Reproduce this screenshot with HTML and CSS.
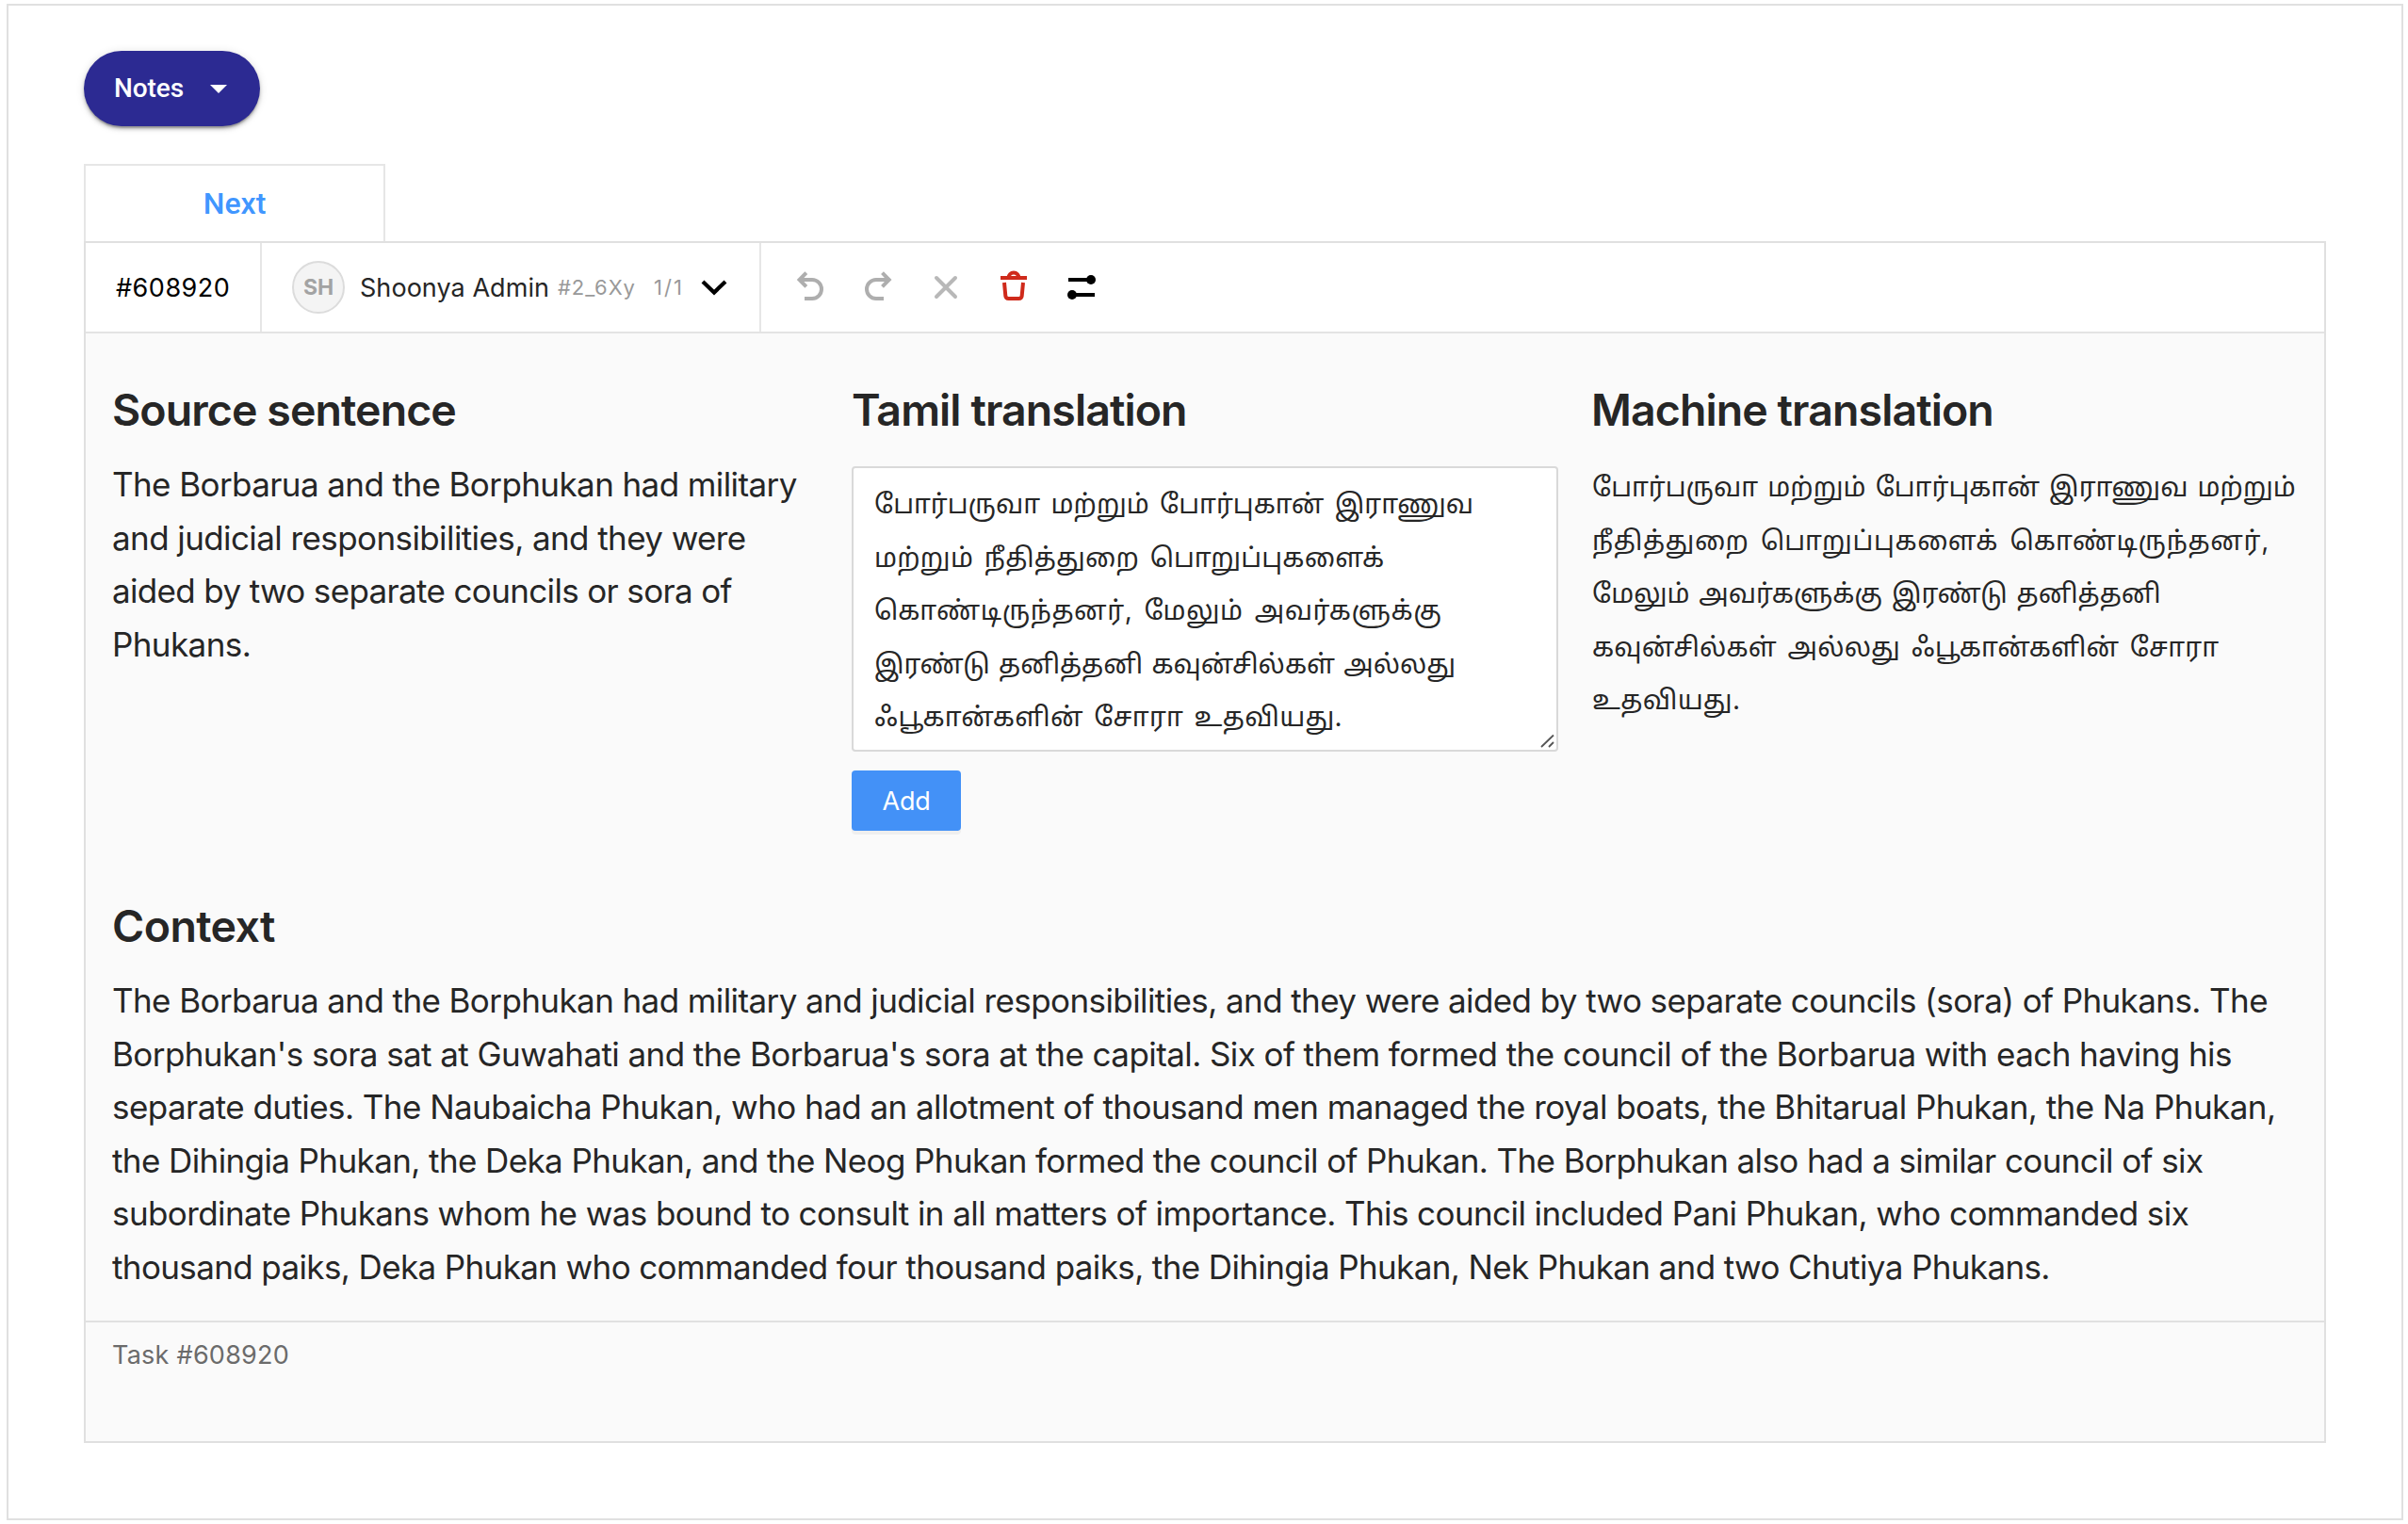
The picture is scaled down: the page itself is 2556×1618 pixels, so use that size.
FILE: index.html
```html
<!DOCTYPE html>
<html lang="en">
<head>
<meta charset="utf-8">
<title>Task #608920</title>
<link rel="stylesheet" href="styles.css">
</head>
<body>
<main class="frame">
  <button class="notes"><span>Notes</span>
    <svg class="notes-caret" viewBox="0 0 18 9"><path d="M0 0h18l-9 9z" fill="#fff"/></svg>
  </button>
  <div class="tab">Next</div>
  <section class="panel">
    <header class="toolbar">
      <div class="task-id">#608920</div>
      <div class="annotator">
        <span class="avatar">SH</span>
        <span class="name">Shoonya Admin</span>
        <span class="hash">#2_6Xy</span>
        <span class="count">1/1</span>
        <svg class="chevron" viewBox="0 0 28 17"><path d="M2 2l12 11.500L26 2" fill="none" stroke="#000" stroke-width="4.200"/></svg>
      </div>
      <div class="tools">
        <svg class="tool" viewBox="0 0 40 40"><g fill="none" stroke="#aeaeae" stroke-width="4"><path d="M15.800 5.700L8.600 13l7.200 7.300"/><path d="M10 13h12a10 10 0 0 1 0 20H14"/></g></svg>
        <svg class="tool" viewBox="0 0 40 40"><g fill="none" stroke="#aeaeae" stroke-width="4"><path d="M24.500 5.700L31.700 13l-7.200 7.300"/><path d="M30 13H18a10 10 0 0 0 0 20h8"/></g></svg>
        <svg class="tool" viewBox="0 0 40 40"><path d="M10 11l20 20M30 11L10 31" fill="none" stroke="#b8b8b8" stroke-width="4" stroke-linecap="round"/></svg>
        <svg class="tool" viewBox="0 0 40 40"><g fill="none" stroke="#cf2a1b" stroke-width="4"><path d="M6 11h28M14.500 11a5.500 5.500 0 0 1 11 0M10 16l1.300 14q.3 3 3.300 3h10.800q3 0 3.300-3L30 16"/></g></svg>
        <svg class="tool" viewBox="0 0 40 40"><path d="M6 13h24M10 29h24" stroke="#000" stroke-width="4"/><circle cx="30" cy="13" r="5"/><circle cx="10" cy="29" r="5"/></svg>
      </div>
    </header>
    <div class="content">
      <div class="columns">
        <section class="column">
          <h2>Source sentence</h2>
          <p class="text source">
            <span class="line">The Borbarua and the Borphukan had military</span>
            <span class="line">and judicial responsibilities, and they were</span>
            <span class="line">aided by two separate councils or sora of</span>
            <span class="line">Phukans.</span>
          </p>
        </section>
        <section class="column">
          <h2>Tamil translation</h2>
          <div class="field text tamil" lang="ta">
            <span class="line">போர்பருவா மற்றும் போர்புகான் இராணுவ</span>
            <span class="line">மற்றும் நீதித்துறை பொறுப்புகளைக்</span>
            <span class="line">கொண்டிருந்தனர், மேலும் அவர்களுக்கு</span>
            <span class="line">இரண்டு தனித்தனி கவுன்சில்கள் அல்லது</span>
            <span class="line">ஃபூகான்களின் சோரா உதவியது.</span>
            <svg class="grip" viewBox="0 0 16 16"><path d="M2 14L15 1.500M10 14l5-5" stroke="#555" stroke-width="1.800"/></svg>
          </div>
          <button class="add">Add</button>
        </section>
        <section class="column">
          <h2>Machine translation</h2>
          <p class="machine text tamil" lang="ta">
            <span class="line">போர்பருவா மற்றும் போர்புகான் இராணுவ மற்றும்</span>
            <span class="line">நீதித்துறை பொறுப்புகளைக் கொண்டிருந்தனர்,</span>
            <span class="line">மேலும் அவர்களுக்கு இரண்டு தனித்தனி</span>
            <span class="line">கவுன்சில்கள் அல்லது ஃபூகான்களின் சோரா</span>
            <span class="line">உதவியது.</span>
          </p>
        </section>
      </div>
      <section class="context">
        <h2>Context</h2>
        <p class="text">
          <span class="line">The Borbarua and the Borphukan had military and judicial responsibilities, and they were aided by two separate councils (sora) of Phukans. The</span>
          <span class="line">Borphukan's sora sat at Guwahati and the Borbarua's sora at the capital. Six of them formed the council of the Borbarua with each having his</span>
          <span class="line">separate duties. The Naubaicha Phukan, who had an allotment of thousand men managed the royal boats, the Bhitarual Phukan, the Na Phukan,</span>
          <span class="line">the Dihingia Phukan, the Deka Phukan, and the Neog Phukan formed the council of Phukan. The Borphukan also had a similar council of six</span>
          <span class="line">subordinate Phukans whom he was bound to consult in all matters of importance. This council included Pani Phukan, who commanded six</span>
          <span class="line">thousand paiks, Deka Phukan who commanded four thousand paiks, the Dihingia Phukan, Nek Phukan and two Chutiya Phukans.</span>
        </p>
      </section>
    </div>
    <footer class="footer">Task #608920</footer>
  </section>
</main>
</body>
</html>
```
FILE: styles.css
```css
* { box-sizing: border-box; }
body {
  margin: 0;
  padding: 4px 5px 4px 7px;
  height: 1618px;
  background: #fff;
  color: #262626;
  font-family: Inter, "Noto Sans Tamil", "Noto Sans", sans-serif;
}
button { border: 0; margin: 0; font-family: inherit; }
h2, p { margin: 0; }
svg { display: block; flex: none; }

.frame {
  display: flex;
  flex-direction: column;
  align-items: flex-start;
  height: 1610px;
  padding: 48px 80px;
  border: 2px solid #e0e0e0;
}
.notes {
  display: flex;
  align-items: center;
  gap: 28px;
  width: 187px;
  height: 80px;
  padding: 0 0 2px 32px;
  border-radius: 40px;
  background: #2c2a92;
  color: #fff;
  font: 500 28px/49px Roboto, sans-serif;
  letter-spacing: -.1px;
  box-shadow: 0 3px 2px -1px rgba(0,0,0,.25), 0 3px 4px rgba(0,0,0,.2), 0 1px 10px rgba(0,0,0,.12);
}
.notes-caret { width: 18px; height: 9px; margin-top: 3px; }
.tab {
  display: flex;
  align-items: center;
  justify-content: center;
  width: 320px;
  height: 82px;
  margin-top: 40px;
  border: 2px solid #e6e6e6;
  border-bottom: 0;
  color: #4096ff;
  font: 500 32px/48px Roboto, sans-serif;
}
.panel {
  display: flex;
  flex-direction: column;
  width: 2380px;
  height: 1276px;
  border: 2px solid #e0e0e0;
  background: #fafafa;
}
.toolbar {
  display: flex;
  flex: none;
  height: 96px;
  border-bottom: 2px solid #e3e3e3;
  background: #fff;
}
.task-id, .annotator { display: flex; align-items: center; border-right: 2px solid #e6e6e6; }
.task-id { width: 187px; padding-left: 32px; color: #000; font-size: 27px; letter-spacing: .5px; }
.annotator { width: 530px; padding-left: 32px; white-space: nowrap; }
.avatar {
  display: flex;
  align-items: center;
  justify-content: center;
  width: 56px;
  height: 56px;
  margin-right: 16px;
  border: 2px solid #dcdcdc;
  border-radius: 50%;
  background: #f4f4f4;
  color: #a3a3a3;
  font-size: 23px;
  font-weight: 700;
}
.name { width: 210px; font-size: 27px; letter-spacing: .05px; }
.hash { width: 102px; color: #999; font-size: 22px; letter-spacing: .9px; }
.count { width: 50px; color: #999; font-size: 22px; letter-spacing: 2px; }
.chevron { width: 28px; height: 17px; }
.tools { display: flex; align-items: center; gap: 32px; padding: 0 0 2px 32px; }
.tool { width: 40px; height: 40px; }

.content { height: 1048px; padding: 47px 28px 0; }
.columns { display: grid; grid-template-columns: 750px 750px 1fr; column-gap: 35px; height: 548px; }
h2 { height: 68px; font-size: 46.5px; font-weight: 600; line-height: 68px; letter-spacing: -.92px; white-space: nowrap; }
.context h2 { letter-spacing: -.6px; }
.text { margin-top: 17px; color: #262626; font-size: 35px; line-height: 56.57px; letter-spacing: -.59px; }
.tamil { font-size: 28px; letter-spacing: 0; }
.line { display: block; white-space: nowrap; }
.source .line:nth-child(3) { letter-spacing: -.65px; }
.context .line:nth-child(2) { letter-spacing: -.575px; }
.context .line:nth-child(3) { letter-spacing: -.56px; }
.context .line:nth-child(4) { letter-spacing: -.6px; }
.context .line:nth-child(6) { letter-spacing: -.62px; }

.field {
  position: relative;
  height: 303px;
  margin-top: 26px;
  padding: 10px 22px 0;
  border: 2px solid #d9d9d9;
  border-radius: 4px;
  background: #fff;
}
.field .line:nth-child(1) { word-spacing: 3.5px; }
.field .line:nth-child(2) { letter-spacing: .25px; word-spacing: 3.5px; }
.field .line:nth-child(3) { letter-spacing: .6px; word-spacing: 3.5px; }
.field .line:nth-child(4) { word-spacing: 1.4px; }
.field .line:nth-child(5) { letter-spacing: .4px; word-spacing: 3px; }
.machine { margin-top: 20px; padding-left: 1px; }
.machine .line:nth-child(1) { word-spacing: 2.3px; }
.machine .line:nth-child(2) { letter-spacing: .7px; word-spacing: 4px; }
.machine .line:nth-child(3) { word-spacing: 2px; }
.machine .line:nth-child(4) { letter-spacing: .2px; word-spacing: 3.5px; }
.machine .line:nth-child(5) { letter-spacing: .4px; }

.grip { position: absolute; right: 2px; bottom: 1px; width: 16px; height: 16px; }
.add {
  display: flex;
  align-items: center;
  justify-content: center;
  width: 116px;
  height: 64px;
  margin-top: 20px;
  border-radius: 4px;
  background: #4391f7;
  color: #fff;
  font-size: 27px;
  letter-spacing: -.2px;
  box-shadow: 0 4px 0 rgba(0,0,0,.045);
}
.footer { flex: 1; padding: 13px 28px; border-top: 2px solid #e0e0e0; color: #6b6b6b; font-size: 27px; line-height: 44px; letter-spacing: .25px; }
```
